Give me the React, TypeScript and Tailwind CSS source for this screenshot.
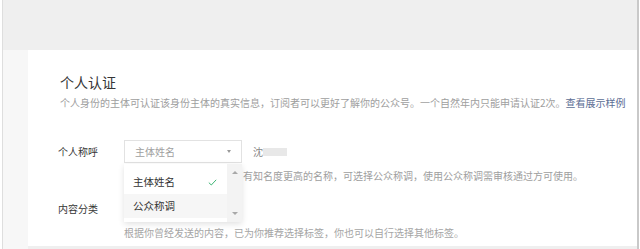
import React from 'react';

const font = { fontFamily: '"Noto Sans CJK SC", "Noto Sans", sans-serif' };

function Dropdown() {
    return (
        <div className="absolute left-0 top-[24px] w-[118px] h-[58px] flex bg-white shadow-[0_2px_6px_rgba(0,0,0,0.12)] z-10">
            <div className="flex-1 flex flex-col pt-[6px]">
                <div className="h-[24px] flex items-center justify-between pl-[9px] pr-[10px] text-[10.5px] text-[#333]">
                    <span>主体姓名</span>
                    <svg width="9" height="7" viewBox="0 0 9 7" fill="none">
                        <path d="M0.8 3.6 L3.3 6 L8.2 0.8" stroke="#3eb575" strokeWidth="1" />
                    </svg>
                </div>
                <div className="h-[24px] flex items-center pl-[9px] text-[10.5px] text-[#333] bg-[#f6f6f6]">
                    公众称调
                </div>
            </div>
            <div className="w-[15px] bg-[#f3f3f3] flex flex-col items-center justify-between pt-[7px] pb-[7px]">
                <span className="w-0 h-0 border-l-[3px] border-r-[3px] border-b-[3px] border-l-transparent border-r-transparent border-b-[#a8a8a8]" />
                <span className="w-0 h-0 border-l-[3px] border-r-[3px] border-t-[3px] border-l-transparent border-r-transparent border-t-[#a8a8a8]" />
            </div>
        </div>
    );
}

export default function App() {
    return (
        <div className="w-[640px] h-[249px] flex bg-white overflow-hidden" style={font}>
            <div className="w-[2px] bg-white" />
            <div className="w-[1px] bg-[#dedede]" />
            <div className="flex-1 flex flex-col bg-[#f0f0f0]">
                <div className="h-[50px] bg-[#efefef]" />
                <div className="flex-1 flex">
                    <div className="w-[25px] bg-[#f7f7f7]" />
                    <div className="flex-1 flex flex-col bg-white pl-[30px] pt-[22px] border-b-[3px] border-[#efefef]">
                        <h1 className="ml-[2px] text-[14px] leading-[20px] text-[#353535]">个人认证</h1>
                        <p className="ml-[2px] mt-[4px] text-[10px] leading-[14px] text-[#9e9e9e] whitespace-nowrap">
                            个人身份的主体可认证该身份主体的真实信息，订阅者可以更好了解你的公众号。一个自然年内只能申请认证2次。
                            <span className="text-[#5b6d94]">查看展示样例</span>
                        </p>

                        <div className="mt-[30px] flex items-center h-[23px]">
                            <span className="w-[66px] text-[10px] text-[#353535]">个人称呼</span>
                            <div className="relative">
                                <div className="w-[118px] h-[23px] border border-[#e2e2e2] flex items-center justify-between pl-[10px] pr-[10px] text-[10px] text-[#a0a0a0]">
                                    <span>主体姓名</span>
                                    <span className="w-0 h-0 border-l-[2.5px] border-r-[2.5px] border-t-[3px] border-l-transparent border-r-transparent border-t-[#999]" />
                                </div>
                                <Dropdown />
                            </div>
                            <span className="ml-[11px] text-[10px] text-[#888]">沈</span>
                            <span className="w-[24px] h-[8px] bg-[#e8e8e8]" />
                        </div>
                        <p className="mt-[6px] pl-[185px] text-[10px] leading-[14px] text-[#9e9e9e] whitespace-nowrap">
                            有知名度更高的名称，可选择公众称调，使用公众称调需审核通过方可使用。
                        </p>

                        <div className="mt-[18px] flex items-center h-[14px]">
                            <span className="w-[66px] text-[10px] text-[#353535]">内容分类</span>
                        </div>
                        <p className="mt-[11px] pl-[66px] text-[10px] leading-[14px] text-[#a5a5a5] whitespace-nowrap">
                            根据你曾经发送的内容，已为你推荐选择标签，你也可以自行选择其他标签。
                        </p>
                    </div>
                </div>
            </div>
            <div className="w-[2px] bg-[#c9c9c9]" />
            <div className="w-[1px] bg-white" />
        </div>
    );
}
